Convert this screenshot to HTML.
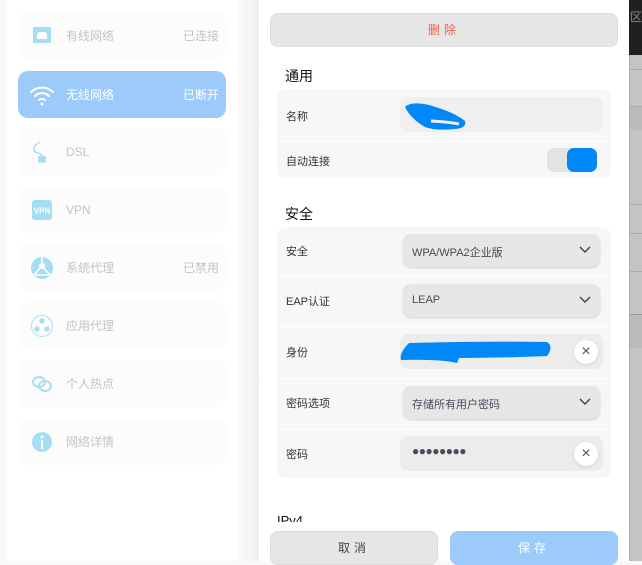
<!DOCTYPE html>
<html><head><meta charset="utf-8"><style>
*{margin:0;padding:0;box-sizing:border-box}
body{width:642px;height:561px;overflow:hidden;position:relative;background:#f9f9f9;font-family:"Liberation Sans","Noto Sans CJK SC",sans-serif;font-size:12px}
.a{position:absolute}
.side{left:7px;top:0;width:230px;height:561px;background:#fff}
.shade{left:237px;top:0;width:22px;height:561px;background:linear-gradient(90deg,#fafafa,#f0f0f0)}
.item{position:absolute;left:18px;width:208px;height:47px;background:#fcfcfc;border-radius:10px;color:#c3c3cb}
.item .t{position:absolute;left:48px;top:15px;font-size:12px}
.item .s{position:absolute;right:7px;top:15px}
.item .ic{position:absolute;left:12px;top:12px;width:24px;height:24px}
.dlg{left:259px;top:0;width:370px;height:561px;background:#fff}
.btn{position:absolute;background:#e6e6e6;border-radius:8px;border:1px solid #dcdcdc;text-align:center;font-size:12px;letter-spacing:4px}
.grp{position:absolute;left:277px;width:334px;background:#f7f7f7;border-radius:9px}
.row{position:absolute;left:0;width:334px;border-top:1px solid #fff}
.lab{position:absolute;left:9px;color:#333;font-size:11px}
.sel{position:absolute;left:126px;width:197px;height:33px;background:#e6e6e6;border-radius:8px;box-shadow:0 1px 2px rgba(0,0,0,.15);color:#4a4a5a;font-size:11px;padding:10px 0 0 9px}
.sel svg{position:absolute;right:9px;top:12px}
.inp{position:absolute;left:123px;width:203px;height:35px;background:#ececec;border-radius:8px}
.x{position:absolute;right:5px;top:6px;width:24px;height:24px;border-radius:50%;background:#fff;box-shadow:0 1px 3px rgba(0,0,0,.12);text-align:center;line-height:23px;color:#555;font-size:16px}
.h{position:absolute;left:285px;font-size:14px;color:#111}
</style></head><body>
<div class="a side"></div>
<div class="a shade"></div>

<div class="item" style="top:12px"><svg class="ic" viewBox="0 0 24 24"><rect x="3" y="3" width="18" height="16" rx="1" fill="#a5def2"/><path d="M7 15V10l2-2h6l2 2v5z" fill="#fff"/></svg><span class="t">有线网络</span><span class="s">已连接</span></div>
<div class="item" style="top:71px;background:#9ccbfb;color:#fff"><svg class="ic" viewBox="0 0 24 24" fill="none" stroke="#fff" stroke-width="2" stroke-linecap="round"><path d="M1 9a16 16 0 0 1 22 0"/><path d="M5 13a10 10 0 0 1 14 0"/><path d="M9 17a4.5 4.5 0 0 1 6 0"/><circle cx="12" cy="21" r="1.5" fill="#fff" stroke="none"/></svg><span class="t">无线网络</span><span class="s">已断开</span></div>
<div class="item" style="top:128px"><svg class="ic" viewBox="0 0 24 24" fill="none" stroke="#a5def2" stroke-width="1.5"><path d="M10 2Q1 7 5 12Q13 14 12 17"/><rect x="9" y="17" width="6" height="5" fill="#a5def2"/></svg><span class="t" style="top:17px">DSL</span></div>
<div class="item" style="top:186px"><svg class="ic" viewBox="0 0 24 24"><rect x="2" y="2" width="20" height="20" rx="3" fill="#a5def2"/><text x="12" y="15.5" font-size="8" fill="#fff" text-anchor="middle" font-family="Liberation Sans" font-weight="bold">VPN</text></svg><span class="t" style="top:17px">VPN</span></div>
<div class="item" style="top:244px"><svg class="ic" viewBox="0 0 24 24"><circle cx="12" cy="12" r="11" fill="#a5def2"/><path d="M12 1v9M4 19l8-9 8 9M4 19h16" stroke="#fff" stroke-width="1.6" fill="none"/><circle cx="12" cy="10" r="3" fill="#fff"/></svg><span class="t">系统代理</span><span class="s">已禁用</span></div>
<div class="item" style="top:302px"><svg class="ic" viewBox="0 0 24 24"><circle cx="12" cy="12" r="10.5" fill="none" stroke="#a5def2" stroke-width="1"/><circle cx="12" cy="7" r="2.6" fill="#a5def2"/><circle cx="7" cy="15" r="2.6" fill="#a5def2"/><circle cx="17" cy="15" r="2.6" fill="#a5def2"/></svg><span class="t">应用代理</span></div>
<div class="item" style="top:360px"><svg class="ic" viewBox="0 0 24 24" fill="none" stroke="#a5def2" stroke-width="2"><ellipse cx="9" cy="10" rx="6" ry="5"/><ellipse cx="15" cy="14" rx="6" ry="5"/></svg><span class="t">个人热点</span></div>
<div class="item" style="top:418px"><svg class="ic" viewBox="0 0 24 24"><circle cx="12" cy="12" r="10" fill="#a5def2"/><circle cx="12" cy="7" r="1.5" fill="#fff"/><rect x="11" y="10" width="2" height="9" fill="#fff"/></svg><span class="t">网络详情</span></div>

<div class="a dlg"></div>
<div class="a" style="left:629px;top:0;width:13px;height:561px;background:#c4c4c4;border-left:1px solid #aaa"></div>
<div class="a" style="left:629px;top:0;width:13px;height:55px;background:#202020;color:#888;font-size:12px;padding-left:1px;padding-top:8px">区</div>
<div class="a" style="left:630px;top:69px;width:12px;height:1px;background:#aaa"></div>
<div class="a" style="left:630px;top:106px;width:12px;height:24px;background:#bbb;border-top:1px solid #aaa"></div>
<div class="a" style="left:630px;top:204px;width:12px;height:1px;background:#aaa"></div>
<div class="a" style="left:630px;top:233px;width:12px;height:1px;background:#aaa"></div>
<div class="a" style="left:630px;top:271px;width:12px;height:1px;background:#aaa"></div>
<div class="a" style="left:630px;top:314px;width:12px;height:34px;background:#bbb;border-top:1px solid #999"></div>

<div class="btn" style="left:270px;top:13px;width:348px;height:34px;line-height:32px;color:#f0604a">删除</div>
<div class="h" style="top:66px">通用</div>
<div class="grp" style="top:89px;height:89px">
 <span class="lab" style="top:19px">名称</span>
 <div class="inp" style="top:8px;background:#efefef"></div>
 <svg class="a" style="left:122px;top:8px" width="75" height="40" viewBox="0 0 75 40"><path d="M6 10Q12 4 30 8Q55 15 66 24Q68 31 56 32Q36 34 26 30Q12 22 6 10Z" fill="#0088f8"/><path d="M32 24Q50 25 60 27" stroke="#efefef" stroke-width="3" fill="none"/></svg>
 <div class="row" style="top:52px;height:37px"><span class="lab" style="top:11px">自动连接</span>
  <div class="a" style="left:270px;top:6px;width:50px;height:24px;background:#e3e3e3;border-radius:7px"></div>
  <div class="a" style="left:290px;top:6px;width:30px;height:24px;background:#0088f8;border-radius:7px"></div></div>
</div>
<div class="h" style="top:204px">安全</div>
<div class="grp" style="top:227px;height:251px">
 <div class="row" style="top:0;height:49px;border:0"><span class="lab" style="top:16px">安全</span><div class="sel" style="top:7px">WPA/WPA2企业版<svg width="12" height="8" viewBox="0 0 12 8"><path d="M1 1l5 5 5-5" stroke="#444" stroke-width="1.4" fill="none"/></svg></div></div>
 <div class="row" style="top:49px;height:50px"><span class="lab" style="top:16px">EAP认证</span><div class="sel" style="top:7px">LEAP<svg width="12" height="8" viewBox="0 0 12 8"><path d="M1 1l5 5 5-5" stroke="#444" stroke-width="1.4" fill="none"/></svg></div></div>
 <div class="row" style="top:99px;height:52px"><span class="lab" style="top:17px">身份</span><div class="inp" style="top:7px"><div class="x">×</div></div>
  <svg class="a" style="left:122px;top:12px" width="155" height="26" viewBox="0 0 155 26"><path d="M10 4Q80 2 148 3Q155 8 148 17Q100 19 60 19L58 24Q40 20 2 21Q0 14 10 4Z" fill="#0088f8"/></svg></div>
 <div class="row" style="top:151px;height:51px"><span class="lab" style="top:16px">密码选项</span><div class="sel" style="top:7px">存储所有用户密码<svg width="12" height="8" viewBox="0 0 12 8"><path d="M1 1l5 5 5-5" stroke="#444" stroke-width="1.4" fill="none"/></svg></div></div>
 <div class="row" style="top:202px;height:49px"><span class="lab" style="top:16px">密码</span><div class="inp" style="top:6px"><span class="a" style="left:12px;top:8px;color:#4a4a5a;font-size:12px;letter-spacing:-0.5px">●●●●●●●●</span><div class="x">×</div></div></div>
</div>
<div class="a" style="left:277px;top:513px;height:9px;overflow:hidden;font-size:13px;color:#111;line-height:16px">IPv4</div>
<div class="btn" style="left:270px;top:531px;width:168px;height:34px;line-height:32px;color:#444">取消</div>
<div class="btn" style="left:450px;top:531px;width:168px;height:34px;line-height:32px;color:#fff;background:#9ccbfb;border-color:#9ccbfb">保存</div>
</body></html>
